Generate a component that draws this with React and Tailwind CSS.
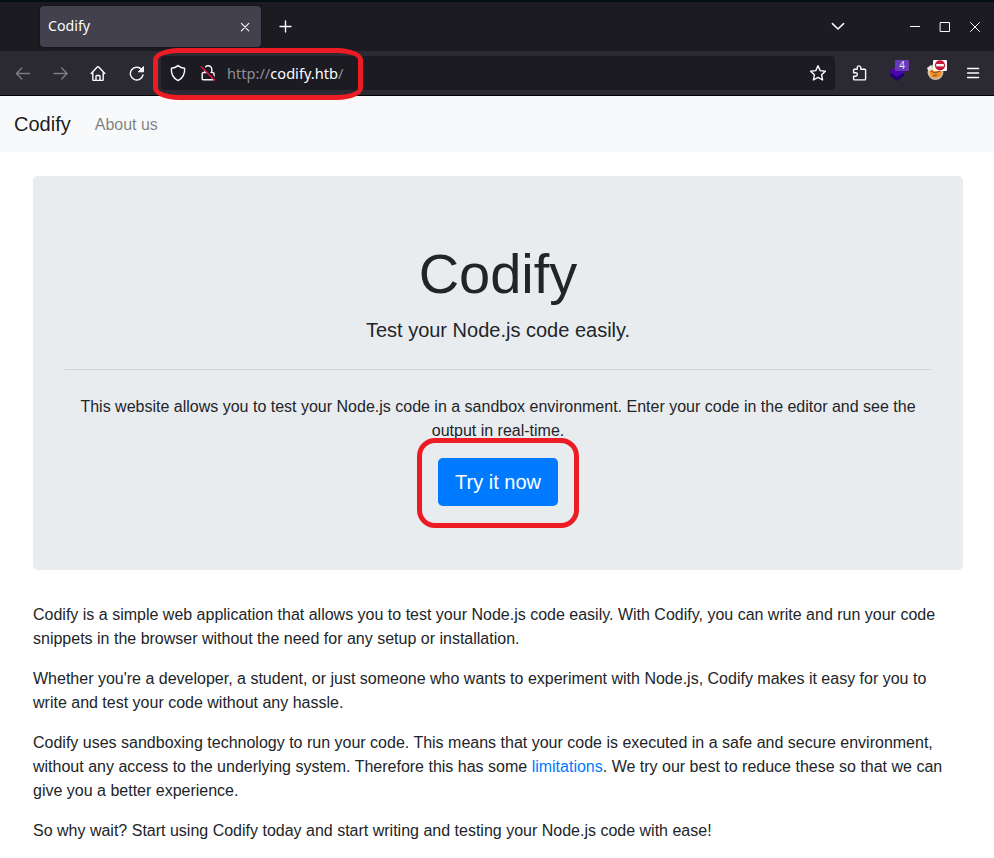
const stroke = {
  fill: "none",
  stroke: "currentColor",
  strokeWidth: 1.4,
  strokeLinecap: "round",
  strokeLinejoin: "round",
};

function Icon({ className = "", size = 16, children }) {
  return (
    <svg width={size} height={size} viewBox={`0 0 ${size} ${size}`} className={`shrink-0 ${className}`} {...stroke}>
      {children}
    </svg>
  );
}

function TabBar() {
  return (
    <div className="flex h-[51px] items-start border-t-2 border-[#020d14] bg-[#1c1b22] pl-10 text-[#fbfbfe]">
      <div className="mt-1 flex h-[41px] w-[221px] items-center justify-between rounded bg-[#42414d] pr-2 pl-2 shadow-[0_0_3px_rgba(0,0,0,0.5)]">
        <span className="pb-0.5 font-['Noto_Sans'] text-[14.2px] leading-5">Codify</span>
        <Icon>
          <path strokeWidth="1.1" d="M4.4 4.4l7.4 7.4M11.8 4.4l-7.4 7.4" />
        </Icon>
      </div>
      <div className="ml-4 flex h-[49px] items-center">
        <Icon size={18}>
          <path d="M8.5 3v11M3 8.5h11" />
        </Icon>
      </div>
      <div className="ml-auto flex h-[49px] items-center pr-[11px]">
        <Icon size={16} className="mr-[61px] -mt-px">
          <path strokeWidth="1.5" d="M2.4 5.6L8 11l5.6-5.4" />
        </Icon>
        <Icon className="mr-[14px]">
          <path strokeWidth="1" strokeLinecap="butt" d="M3 7.5h10" />
        </Icon>
        <Icon className="mr-[14px]">
          <path strokeWidth="1" strokeLinejoin="miter" d="M3.5 3.5h9v9h-9z" />
        </Icon>
        <Icon>
          <path strokeWidth="1" d="M3.5 3.5l9 9M12.5 3.5l-9 9" />
        </Icon>
      </div>
    </div>
  );
}

function ToolBar() {
  return (
    <div className="flex h-[45px] items-center border-b border-black bg-[#2b2a33] pl-[15px] text-[#fbfbfe]">
      <Icon className="mr-[22px] text-[#7d7c83]">
        <path d="M14.5 8.5H1.5M6.8 3L1.4 8.5 6.8 14" />
      </Icon>
      <Icon className="mr-[21px] text-[#7d7c83]">
        <path d="M1 8.5h13M8.7 3l5.4 5.5L8.7 14" />
      </Icon>
      <Icon className="mr-[23px]">
        <path d="M1.2 8.6L7.5 1.8q.5-.4 1 0l6.3 6.8M2.8 7.5v7q0 .9.9.9h8.6q.9 0 .9-.9v-7M6 15.3v-4q0-.8.8-.8h2.4q.8 0 .8.8v4" />
      </Icon>
      <Icon>
        <path d="M12.6 4.4A6.4 6.4 0 1 0 14 10" />
        <path fill="currentColor" strokeWidth="1" d="M14.5 2v4.8H9.7z" />
      </Icon>
      <div className="ml-4 flex h-[34px] w-[674px] items-center rounded bg-[#1c1b22] pr-2">
        <Icon size={18} className="ml-2">
          <path d="M9 1.6c2 1.7 4.2 2.5 6.6 2.7.5 5.4-1.4 9.6-6.6 12.4C3.8 13.9 1.9 9.7 2.4 4.3 4.8 4.1 7 3.3 9 1.6z" />
        </Icon>
        <Icon size={18} className="ml-3">
          <path d="M5.6 8.4V5.3a3.6 3.6 0 0 1 7.2 0v3.1M4.2 8.6h9.8q1 0 1 1v5.2q0 1-1 1H4.2q-1 0-1-1V9.6q0-1 1-1z" />
          <path stroke="#1c1b22" strokeWidth="3" d="M2.8 2l13.4 13.4" />
          <path stroke="#f0144b" strokeWidth="1.4" d="M2.2 2.8l13.2 13.2" />
        </Icon>
        <span className="ml-[10px] font-['Noto_Sans'] text-[14.6px] leading-5 text-[#8f8f98]">
          http://<span className="text-[#fbfbfe]">codify.htb</span>/
        </span>
        <Icon size={18} className="ml-auto">
          <path d="M9 1.8l2.2 4.8 5.2.6-3.8 3.6 1 5.2L9 13.4 4.4 16l1-5.2L1.6 7.2l5.2-.6z" />
        </Icon>
      </div>
      <Icon size={18} className="ml-4">
        <path d="M2.6 6.1q0-.8.8-.8h2.8V3.7a1.8 1.8 0 0 1 3.6 0v1.6h4q.8 0 .8.8v9q0 .8-.8.8H3.4q-.8 0-.8-.8v-2.8h2a1.7 1.7 0 0 0 0-3.5h-2z" />
      </Icon>
      <svg width="22" height="26" viewBox="0 0 22 26" className="ml-5 -mt-0.5 shrink-0">
        <path fill="#210070" d="M0 16l8-6 8 6-8 6z" />
        <path fill="#4b05ad" d="M0 12.5l8-5.5 8 5.5L8 18z" />
        <rect x="6" y="1" width="14" height="11" rx="1" fill="#673ab7" />
        <text x="13" y="10" textAnchor="middle" stroke="none" className="fill-[#e9e3f5] font-['Noto_Sans'] text-[10px]">4</text>
      </svg>
      <svg width="22" height="26" viewBox="0 0 22 26" className="ml-4 -mt-0.5 shrink-0">
        <circle cx="8.5" cy="13.2" r="7.9" fill="#cdbb9f" />
        <path fill="#efe8df" d="M0 9l4-3 4 8-5 2z" />
        <path fill="#ee9127" d="M2 12l7-3 6 1-1 7-5 2-5-1z" />
        <path stroke="#7d4a1c" strokeWidth="1" fill="none" d="M4 12l4 2 5-2M6 17l4-1" />
        <rect x="6" y="1" width="14" height="11" rx="1" fill="#fff" />
        <circle cx="13" cy="6.3" r="5.1" fill="#c51635" />
        <path fill="#fff" d="M9.2 5h7.6v2.4H9.2z" />
      </svg>
      <Icon className="ml-4">
        <path d="M2.6 3.5h11M2.6 8h11M2.6 12.5h11" />
      </Icon>
    </div>
  );
}

export default function App() {
  return (
    <div className="relative h-[858px] w-[994px] overflow-hidden bg-white font-['Liberation_Sans',sans-serif] text-base leading-6 text-[#212529]">
      <TabBar />
      <ToolBar />
      <nav className="flex h-14 items-center bg-[#f8f9fa] pl-[14px]">
        <span className="text-xl leading-[30px] text-black/90">Codify</span>
        <span className="ml-6 pt-0.5 text-black/50">About us</span>
      </nav>
      <main className="mt-6 ml-[33px] w-[930px]">
        <section className="mb-[33px] rounded-[4.8px] bg-[#e9ecef] px-8 py-16 text-center">
          <h1 className="mb-2 text-[56px] leading-[1.2]">Codify</h1>
          <p className="text-xl leading-[30px]">Test your Node.js code easily.</p>
          <hr className="my-6 border-black/10" />
          <p className="mb-[15px] pt-px">
            This website allows you to test your Node.js code in a sandbox environment. Enter your code in the editor and see the output in real-time.
          </p>
          <div className="flex justify-center">
            <a className="flex h-12 w-[120px] items-center justify-center rounded-[4.8px] bg-[#007bff] text-xl text-white">Try it now</a>
          </div>
        </section>
        <div className="flex flex-col gap-4">
          <p>
            Codify is a simple web application that allows you to test your Node.js code easily. With Codify, you can write and run your code snippets in the browser without the need for any setup or installation.
          </p>
          <p>
            Whether you're a developer, a student, or just someone who wants to experiment with Node.js, Codify makes it easy for you to write and test your code without any hassle.
          </p>
          <p>
            Codify uses sandboxing technology to run your code. This means that your code is executed in a safe and secure environment, without any access to the underlying system. Therefore this has some <a className="text-[#007bff]">limitations</a>. We try our best to reduce these so that we can give you a better experience.
          </p>
          <p>So why wait? Start using Codify today and start writing and testing your Node.js code with ease!</p>
        </div>
      </main>
      {/* Hand-drawn highlights over the address and the call to action */}
      <div className="absolute top-12 left-[153px] h-[52px] w-[210px] rounded-[26px/12px] border-[5px] border-[#ed1c24]" />
      <div className="absolute top-[438px] left-[417px] h-[90px] w-[162px] rounded-[18px] border-[5px] border-[#ed1c24]" />
    </div>
  );
}
